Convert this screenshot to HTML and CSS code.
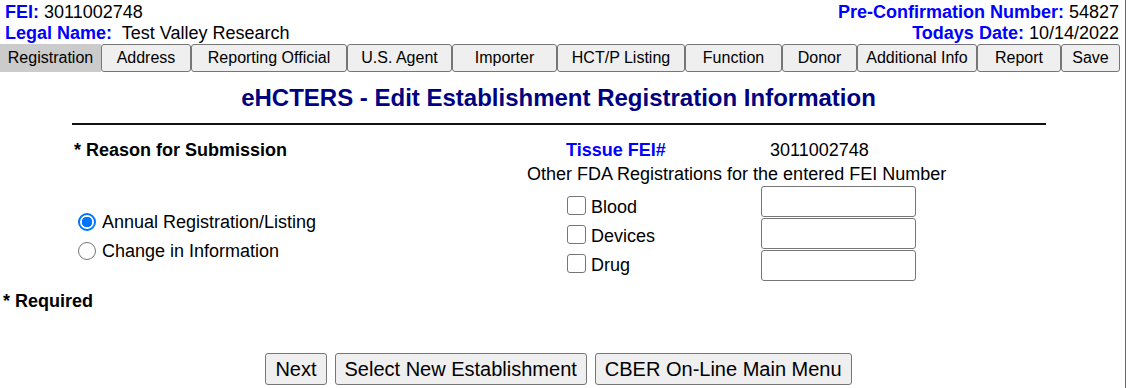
FILE: index.html
```html
<!DOCTYPE html>
<html>
<head>
<meta charset="utf-8">
<title>eHCTERS - Edit Establishment Registration Information</title>
<link rel="stylesheet" href="styles.css">
</head>
<body>
<div class="page">
  <div class="hdr">
    <div class="hdr-left">
      <div><b class="lbl">FEI:</b> 3011002748</div>
      <div><b class="lbl">Legal Name:</b>&nbsp; Test Valley Research</div>
    </div>
    <div class="hdr-right">
      <div><b class="lbl">Pre-Confirmation Number:</b> 54827</div>
      <div><b class="lbl">Todays Date:</b>&nbsp;10/14/2022</div>
    </div>
  </div>

  <div class="tabs">
    <button class="tab active" type="button">Registration</button>
    <button class="tab" type="button">Address</button>
    <button class="tab" type="button">Reporting Official</button>
    <button class="tab" type="button">U.S. Agent</button>
    <button class="tab" type="button">Importer</button>
    <button class="tab" type="button">HCT/P Listing</button>
    <button class="tab" type="button">Function</button>
    <button class="tab" type="button">Donor</button>
    <button class="tab" type="button">Additional Info</button>
    <button class="tab" type="button">Report</button>
    <button class="tab" type="button">Save</button>
  </div>

  <h1 class="title">eHCTERS - Edit Establishment Registration Information</h1>
  <hr class="rule">

  <div class="main">
    <div class="left">
      <div class="reason">* Reason for Submission</div>
      <div class="radios">
        <label class="radio-row"><input class="radio" type="radio" name="reason" checked>Annual Registration/Listing</label>
        <label class="radio-row"><input class="radio" type="radio" name="reason">Change in Information</label>
      </div>
    </div>
    <div class="right">
      <div class="tissue"><b class="lbl tissue-lbl">Tissue FEI#</b><span>3011002748</span></div>
      <div class="other">Other FDA Registrations for the entered FEI Number</div>
      <div class="regs">
        <div class="checks">
          <label class="check-row"><input class="check" type="checkbox">Blood</label>
          <label class="check-row"><input class="check" type="checkbox">Devices</label>
          <label class="check-row"><input class="check" type="checkbox">Drug</label>
        </div>
        <div class="inputs">
          <input type="text">
          <input type="text">
          <input type="text">
        </div>
      </div>
    </div>
  </div>

  <div class="required">* Required</div>

  <div class="actions">
    <button class="btn" type="button">Next</button>
    <button class="btn" type="button">Select New Establishment</button>
    <button class="btn" type="button">CBER On-Line Main Menu</button>
  </div>
</div>
</body>
</html>
```
FILE: styles.css
```css
html, body {
  margin: 0;
  padding: 0;
  background: #fff;
}
body {
  font-family: "Liberation Sans", Arial, sans-serif;
  color: #000;
  font-size: 18px;
}
.page {
  width: 1125px;
  min-height: 388px;
  border-right: 1px solid #4d6a9a;
}
.hdr {
  display: flex;
  justify-content: space-between;
  padding: 2px 6px 0 5px;
  font-size: 18px;
  line-height: 21px;
}
.hdr-right {
  text-align: right;
}
.lbl {
  color: #0000ff;
  font-weight: bold;
}
.tabs {
  display: grid;
  grid-template-columns: 101px 90px 156px 105px 105px 128px 97px 75px 120px 84px 59px;
  height: 28px;
}
.tab {
  font-family: "Liberation Sans", Arial, sans-serif;
  font-size: 16px;
  color: #000;
  background: #efefef;
  border: 1px solid #767676;
  border-radius: 3px;
  padding: 0;
  margin: 0;
  height: 28px;
}
.tab.active {
  background: #cbcbcb;
  border-color: #cbcbcb;
  border-radius: 0;
}
.title {
  width: 1117px;
  margin: 12px 0 0;
  text-align: center;
  font-size: 24px;
  line-height: 28px;
  font-weight: bold;
  color: #000080;
}
.rule {
  margin: 11px 0 0 72px;
  width: 974px;
  height: 0;
  border: 0;
  border-top: 2px solid #111;
}
.main {
  display: flex;
  padding-left: 74px;
  margin-top: 13px;
}
.left {
  width: 453px;
}
.reason {
  font-weight: bold;
  line-height: 24px;
}
.radios {
  margin-top: 46px;
  padding-left: 4px;
}
.radio-row {
  display: flex;
  align-items: center;
  height: 29px;
}
.radio {
  appearance: none;
  -webkit-appearance: none;
  box-sizing: border-box;
  width: 18px;
  height: 18px;
  margin: -2px 6px 0 0;
  border: 1px solid #767676;
  border-radius: 50%;
  background: #fff;
  flex: none;
}
.radio:checked {
  border: 2px solid #0075ff;
  background: radial-gradient(circle, #0075ff 0 5px, #fff 5.5px);
}
.tissue {
  display: flex;
  line-height: 24px;
  padding-left: 39px;
}
.tissue-lbl {
  width: 204px;
}
.other {
  line-height: 24px;
}
.regs {
  display: flex;
}
.checks {
  width: 234px;
  padding: 7px 0 0 40px;
  box-sizing: border-box;
}
.check-row {
  display: flex;
  align-items: center;
  height: 29px;
}
.check {
  appearance: none;
  -webkit-appearance: none;
  box-sizing: border-box;
  width: 19px;
  height: 19px;
  margin: -4px 5px 0 0;
  border: 1px solid #767676;
  border-radius: 3px;
  background: #fff;
  flex: none;
}
.inputs {
  display: flex;
  flex-direction: column;
  gap: 1px;
}
.inputs input {
  width: 155px;
  height: 31px;
  box-sizing: border-box;
  margin: 0;
  border: 1px solid #767676;
  border-radius: 3px;
  background: #fff;
}
.required {
  font-weight: bold;
  line-height: 21px;
  margin: 10px 0 0 3px;
}
.actions {
  width: 1117px;
  display: flex;
  justify-content: center;
  gap: 8px;
  margin-top: 41px;
}
.btn {
  font-family: "Liberation Sans", Arial, sans-serif;
  font-size: 20px;
  color: #000;
  height: 32px;
  padding: 0 9px;
  background: #efefef;
  border: 1px solid #767676;
  border-radius: 3px;
}
```
